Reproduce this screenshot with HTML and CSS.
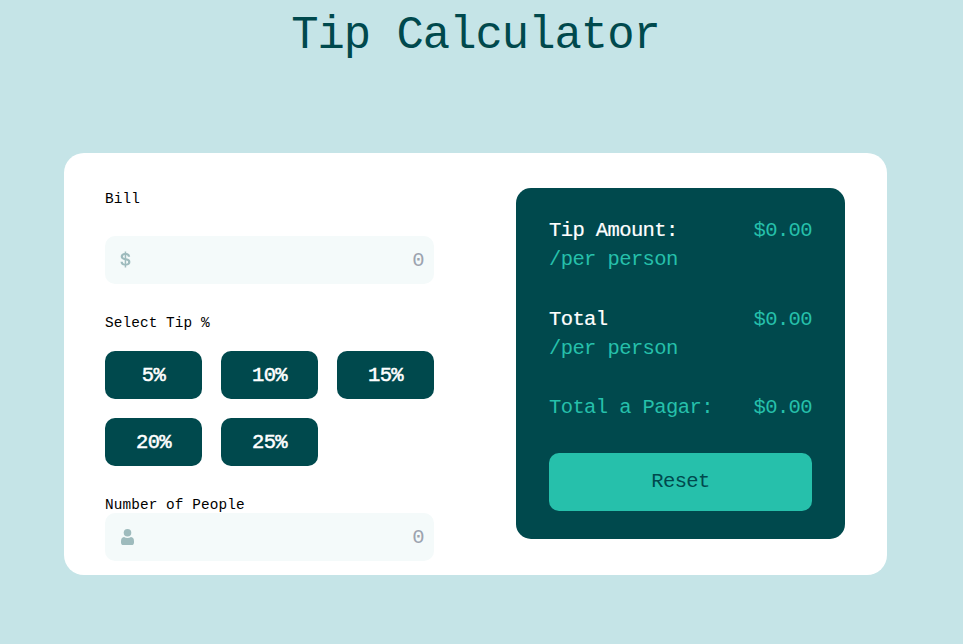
FILE: index.html
```html
<!DOCTYPE html>
<html lang="en">
<head>
<meta charset="utf-8">
<title>Tip Calculator</title>
<link rel="stylesheet" href="styles.css">
</head>
<body>
<h1 class="title">Tip Calculator</h1>
<main class="card">
  <form class="form">
    <label class="label label-bill" for="bill">Bill</label>
    <div class="field">
      <svg class="dollar" width="11" height="17" viewBox="0 0 11 17"><path fill="#9ebbbd" d="M4.7 16.4v-1.8C2 14.4.6 13 .5 10.7h2.3c.1 1.3.7 1.9 1.9 2.1V9.2C2 8.6.7 7.5.7 5.6c0-1.9 1.5-3.3 4-3.500V.5h1.500v1.600c2.500.2 3.900 1.600 4 3.600H7.900c-.1-1-.7-1.600-1.700-1.800v3.300c2.900.6 4.200 1.700 4.200 3.700 0 2.200-1.600 3.500-4.200 3.700v1.800zM4.700 3.900c-1.100.1-1.700.7-1.700 1.500s.5 1.200 1.700 1.500zm1.500 8.900c1.300-.1 1.900-.7 1.900-1.700 0-.9-.5-1.300-1.900-1.600z"/></svg>
      <input class="input" id="bill" type="text" placeholder="0">
    </div>
    <p class="label label-tip">Select Tip %</p>
    <div class="tips">
      <button class="tip" type="button">5%</button>
      <button class="tip" type="button">10%</button>
      <button class="tip" type="button">15%</button>
      <button class="tip" type="button">20%</button>
      <button class="tip" type="button">25%</button>
    </div>
    <label class="label label-people" for="people">Number of People</label>
    <div class="field">
      <svg width="13" height="16" viewBox="0 0 13 16"><circle cx="6.5" cy="3.8" r="3.8" fill="#9ebbbd"/><path fill="#9ebbbd" d="M3 8c1 .7 2.200 1.100 3.500 1.100S9 8.700 10 8c2 .2 3 1.700 3 4.200v1.200c0 1.600-.9 2.600-2.400 2.600H2.400C.9 16 0 15 0 13.400v-1.200C0 9.700 1 8.200 3 8z"/></svg>
      <input class="input" id="people" type="text" placeholder="0">
    </div>
  </form>
  <section class="summary">
    <div class="row">
      <div><span class="name">Tip Amount:</span><br>/per person</div>
      <span>$0.00</span>
    </div>
    <div class="row">
      <div><span class="name">Total</span><br>/per person</div>
      <span>$0.00</span>
    </div>
    <div class="row">
      <span>Total a Pagar:</span>
      <span>$0.00</span>
    </div>
    <button class="reset" type="button">Reset</button>
  </section>
</main>
</body>
</html>
```
FILE: styles.css
```css
* {
  box-sizing: border-box;
  margin: 0;
  padding: 0;
}

body {
  min-height: 644px;
  background: #c5e4e7;
  font-family: "Liberation Mono", monospace;
  font-size: 20.5px;
  letter-spacing: -0.6px;
  line-height: 29px;
}

button,
input {
  font: inherit;
  letter-spacing: inherit;
  border: 0;
}

.title {
  height: 153px;
  width: 951px;
  padding-top: 4px;
  color: #00494d;
  font-size: 45.5px;
  font-weight: 400;
  letter-spacing: -0.97px;
  line-height: 64px;
  text-align: center;
}

.card {
  display: flex;
  justify-content: space-between;
  width: 823px;
  height: 422px;
  margin-left: 64px;
  padding: 35px 42px 0 41px;
  background: #fff;
  border-radius: 20px;
}

.form {
  width: 329px;
}

.label {
  display: block;
  color: #000;
  font-size: 14.4px;
  letter-spacing: 0.09px;
  line-height: 20px;
}

.label-bill {
  padding-top: 1px;
  margin-bottom: 27px;
}

.label-tip {
  margin: 29px 0 18px;
}

.label-people {
  margin: 29px 0 -2px;
}

.field {
  display: flex;
  align-items: center;
  justify-content: space-between;
  height: 48px;
  padding: 0 10px 0 16px;
  background: #f4fafa;
  border-radius: 10px;
}

.dollar {
  margin: 0 0 2px -1px;
}

.input {
  width: 200px;
  background: none;
  text-align: right;
}

.input::placeholder {
  color: #9ca3af;
}

.tips {
  display: grid;
  grid-template-columns: repeat(3, 97px);
  gap: 19px;
}

.tip {
  height: 48px;
  background: #00494d;
  border-radius: 10px;
  color: #fff;
  -webkit-text-stroke: 0.5px #fff;
}

.summary {
  width: 329px;
  height: 351px;
  padding: 28px 33px 0;
  background: #00494d;
  border-radius: 15px;
  color: #26c0ab;
}

.row {
  display: flex;
  justify-content: space-between;
  margin-bottom: 30.6px;
}

.name {
  color: #fff;
  -webkit-text-stroke: 0.2px #fff;
}

.reset {
  display: block;
  width: 263px;
  height: 58px;
  background: #26c0ab;
  border-radius: 10px;
  color: #00494d;
}
```
